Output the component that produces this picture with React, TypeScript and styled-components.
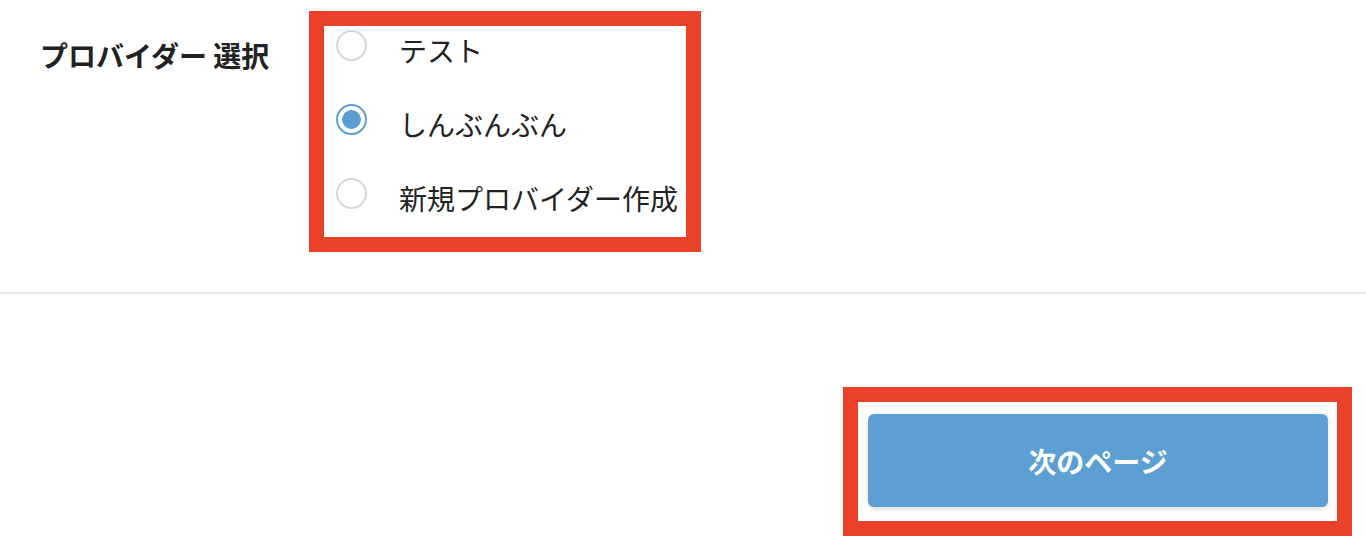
import React, { useState } from 'react';
import styled, { createGlobalStyle } from 'styled-components';

const providers = ['テスト', 'しんぶんぶん', '新規プロバイダー作成'];

export default function App() {
  const [selected, setSelected] = useState(1);

  return (<>
    <GlobalStyle />
    <Page>
      <FieldRow>
        <FieldLabel>プロバイダー 選択</FieldLabel>
        <Highlight>
          <OptionList>
            {providers.map((name, i) => (
              <Option key={name}>
                <Radio type='radio' name='provider' checked={selected === i} onChange={() => setSelected(i)} />
                <OptionText>{name}</OptionText>
              </Option>
            ))}
          </OptionList>
        </Highlight>
      </FieldRow>
      <Divider />
      <Footer>
        <ButtonHighlight>
          <NextButton type='button'>次のページ</NextButton>
        </ButtonHighlight>
      </Footer>
    </Page>
  </>);
}

const GlobalStyle = createGlobalStyle`
  body {
    margin: 0;
    background: #fff;
    font-family: "Noto Sans CJK JP", "Noto Sans", sans-serif;
    color: #222;
  }
`;

const Page = styled.main`
  display: flex;
  flex-direction: column;
  width: 1366px;
`;

const FieldRow = styled.section`
  display: flex;
  align-items: flex-start;
  padding: 11px 0 0 40px;
`;

const FieldLabel = styled.h2`
  width: 269px;
  margin: 24px 0 0;
  font-size: 28px;
  line-height: 40px;
  font-weight: 700;
  color: #222;
  white-space: nowrap;
`;

const Highlight = styled.div`
  width: 362px;
  border: 15px solid #e9412a;
  background: #fff;
`;

const OptionList = styled.div`
  display: flex;
  flex-direction: column;
  gap: 34px;
  padding: 4px 0 19px 12px;
`;

const Option = styled.label`
  display: flex;
  align-items: flex-start;
  gap: 32px;
  height: 40px;
  cursor: pointer;
`;

const Radio = styled.input`
  appearance: none;
  flex: none;
  width: 31px;
  height: 31px;
  margin: 0;
  border: 2px solid #d5d9dd;
  border-radius: 50%;
  background: #fff;

  &:checked {
    border-color: #5b9fd3;
    background: radial-gradient(circle, #5b9fd3 0 9px, #fff 9.6px);
  }
`;

const OptionText = styled.span`
  font-size: 28px;
  line-height: 40px;
  color: #222;
  white-space: nowrap;
`;

const Divider = styled.hr`
  margin: 40px 0 0;
  border: none;
  height: 2px;
  background: #e1e5e9;
`;

const Footer = styled.div`
  display: flex;
  justify-content: flex-end;
  padding: 93px 14px 0 0;
`;

const ButtonHighlight = styled.div`
  border: 15px solid #e9412a;
  padding: 12px 9px 14px 10px;
  background: #fff;
`;

const NextButton = styled.button`
  display: block;
  width: 460px;
  height: 93px;
  border: none;
  border-radius: 6px;
  background: #5c9fd3;
  box-shadow: 0 2px 5px rgba(0, 0, 0, 0.15);
  color: #fff;
  font-family: inherit;
  font-size: 28px;
  font-weight: 700;
  cursor: pointer;
`;
